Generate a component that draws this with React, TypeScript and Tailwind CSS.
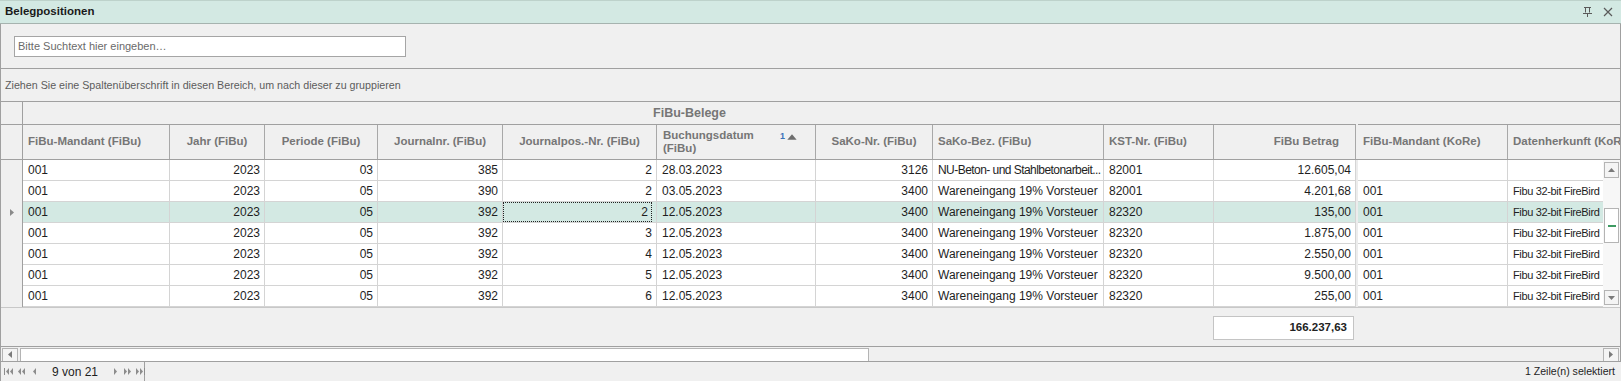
import React from "react";

type Col = {
  label: string;
  w: number;
  align: "left" | "right";
  head: "left" | "center" | "right";
  gapAfter?: boolean;
  tight?: boolean;
};

const cols: Col[] = [
  { label: "FiBu-Mandant (FiBu)", w: 147, align: "left", head: "left" },
  { label: "Jahr (FiBu)", w: 95, align: "right", head: "center" },
  { label: "Periode (FiBu)", w: 113, align: "right", head: "center" },
  { label: "Journalnr. (FiBu)", w: 125, align: "right", head: "center" },
  { label: "Journalpos.-Nr. (FiBu)", w: 154, align: "right", head: "center" },
  { label: "Buchungsdatum (FiBu)", w: 159, align: "left", head: "left" },
  { label: "SaKo-Nr. (FiBu)", w: 117, align: "right", head: "center" },
  { label: "SaKo-Bez. (FiBu)", w: 171, align: "left", head: "left" },
  { label: "KST-Nr. (FiBu)", w: 110, align: "left", head: "left" },
  { label: "FiBu Betrag", w: 142, align: "right", head: "right", gapAfter: true },
  { label: "FiBu-Mandant (KoRe)", w: 150, align: "left", head: "left" },
  { label: "Datenherkunft (KoRe)", w: 140, align: "left", head: "left", tight: true },
];

const rows: string[][] = [
  ["001", "2023", "03", "385", "2", "28.03.2023", "3126", "NU-Beton- und Stahlbetonarbeit...", "82001", "12.605,04", "", ""],
  ["001", "2023", "05", "390", "2", "03.05.2023", "3400", "Wareneingang 19% Vorsteuer", "82001", "4.201,68", "001", "Fibu 32-bit FireBird"],
  ["001", "2023", "05", "392", "2", "12.05.2023", "3400", "Wareneingang 19% Vorsteuer", "82320", "135,00", "001", "Fibu 32-bit FireBird"],
  ["001", "2023", "05", "392", "3", "12.05.2023", "3400", "Wareneingang 19% Vorsteuer", "82320", "1.875,00", "001", "Fibu 32-bit FireBird"],
  ["001", "2023", "05", "392", "4", "12.05.2023", "3400", "Wareneingang 19% Vorsteuer", "82320", "2.550,00", "001", "Fibu 32-bit FireBird"],
  ["001", "2023", "05", "392", "5", "12.05.2023", "3400", "Wareneingang 19% Vorsteuer", "82320", "9.500,00", "001", "Fibu 32-bit FireBird"],
  ["001", "2023", "05", "392", "6", "12.05.2023", "3400", "Wareneingang 19% Vorsteuer", "82320", "255,00", "001", "Fibu 32-bit FireBird"],
];

const selectedRow = 2;

function Tri({ dir, className = "" }: { dir: "l" | "r" | "u" | "d"; className?: string }) {
  const pts = {
    l: "5,0 5,7 1,3.5",
    r: "1,0 1,7 5,3.5",
    u: "0,5 7,5 3.5,1",
    d: "0,1 7,1 3.5,5",
  }[dir];
  const vb = dir === "l" || dir === "r" ? "0 0 6 7" : "0 0 7 6";
  const size = dir === "l" || dir === "r" ? "w-[6px] h-[7px]" : "w-[7px] h-[6px]";
  return (
    <svg viewBox={vb} className={`${size} ${className}`}>
      <polygon points={pts} fill="currentColor" />
    </svg>
  );
}

function NavIcon({ kind }: { kind: "first" | "prevPage" | "prev" | "next" | "nextPage" | "last" }) {
  return (
    <svg viewBox="0 0 10 7" className="w-[10px] h-[7px] shrink-0 text-[#8c8c8c]">
      {kind === "first" && (
        <>
          <rect x="0" y="0" width="1" height="7" fill="currentColor" />
          <polygon points="5,0 5,7 2,3.5" fill="currentColor" />
          <polygon points="9,0 9,7 6,3.5" fill="currentColor" />
        </>
      )}
      {kind === "prevPage" && (
        <>
          <polygon points="4,0 4,7 1,3.5" fill="currentColor" />
          <polygon points="8,0 8,7 5,3.5" fill="currentColor" />
        </>
      )}
      {kind === "prev" && <polygon points="6,0 6,7 3,3.5" fill="currentColor" />}
      {kind === "next" && <polygon points="4,0 4,7 7,3.5" fill="currentColor" />}
      {kind === "nextPage" && (
        <>
          <polygon points="1,0 1,7 4,3.5" fill="currentColor" />
          <polygon points="5,0 5,7 8,3.5" fill="currentColor" />
        </>
      )}
      {kind === "last" && (
        <>
          <polygon points="0,0 0,7 3,3.5" fill="currentColor" />
          <polygon points="4,0 4,7 7,3.5" fill="currentColor" />
          <rect x="8" y="0" width="1" height="7" fill="currentColor" />
        </>
      )}
    </svg>
  );
}

function HeaderCell({ col }: { col: Col }) {
  const justify =
    col.head === "center" ? "justify-center" : col.head === "right" ? "justify-end pr-[16px]" : "justify-start pl-[5px]";
  const isSort = col.label.startsWith("Buchungsdatum");
  return (
    <>
      <div
        style={{ width: col.w }}
        className={`shrink-0 h-full border-r border-[#a8a8a8] flex items-center overflow-hidden whitespace-nowrap font-bold text-[11.5px] text-[#767676] ${justify}`}
      >
        {isSort ? (
          <div className="flex w-full items-center justify-between pl-[1px] pr-[18px]">
            <div className="leading-[13px]">
              Buchungsdatum
              <br />
              (FiBu)
            </div>
            <div className="flex items-center gap-[2px] -mt-[10px]">
              <span className="text-[9px] text-[#3b72b9]">1</span>
              <Tri dir="u" className="w-[10px] h-[8px] text-[#6e6e6e]" />
            </div>
          </div>
        ) : (
          col.label
        )}
      </div>
      {col.gapAfter && <div className="w-[2px] shrink-0 h-full" />}
    </>
  );
}

export default function App() {
  return (
    <div className="w-[1621px] h-[381px] flex flex-col bg-[#f0f0f0] overflow-hidden text-[11px] text-[#1e1e1e] font-['Liberation_Sans',Arial,sans-serif]">
      {/* title bar */}
      <div className="h-[24px] shrink-0 flex items-center justify-between bg-[#d3e9e3] border-t border-[#bdd2cb] border-b border-b-[#a6b3af] pl-[5px] pr-[8px]">
        <span className="font-bold text-[11.5px] text-[#1a1a1a]">Belegpositionen</span>
        <div className="flex items-center gap-[11px] text-[#5a5a5a]">
          <svg viewBox="0 0 9 10" className="w-[9px] h-[10px]">
            <path d="M1 0.5H8M2.5 0.5V5.5M6.5 0.5V5.5M0 6.5H9M4.5 6.5V10" stroke="currentColor" strokeWidth="1" fill="none" />
          </svg>
          <svg viewBox="0 0 10 10" className="w-[10px] h-[10px]">
            <path d="M1 1L9 9M9 1L1 9" stroke="currentColor" strokeWidth="1.2" fill="none" />
          </svg>
        </div>
      </div>

      <div className="flex-1 flex flex-col border-l border-r border-[#a0a0a0] min-h-0">
        {/* search */}
        <div className="h-[45px] shrink-0 border-b border-[#a0a0a0] pl-[13px] pt-[12px]">
          <div className="w-[392px] h-[21px] bg-white border border-[#a5a5a5] flex items-center pl-[3px] text-[#6a6a6a]">
            Bitte Suchtext hier eingeben…
          </div>
        </div>

        {/* group panel */}
        <div className="h-[33px] shrink-0 border-b border-[#a0a0a0] flex items-center pl-[4px] text-[10.7px] text-[#5c5c5c]">
          Ziehen Sie eine Spaltenüberschrift in diesen Bereich, um nach dieser zu gruppieren
        </div>

        {/* band row */}
        <div className="h-[23px] shrink-0 flex">
          <div className="w-[22px] shrink-0 border-r border-b border-[#a0a0a0]" />
          <div className="w-[1333px] shrink-0 border-b border-[#a0a0a0] flex items-center justify-center font-bold text-[12.5px] text-[#767676]">
            FiBu-Belege
          </div>
          <div className="w-[2px] shrink-0" />
          <div className="flex-1 border-b border-[#a0a0a0]" />
        </div>

        {/* column headers */}
        <div className="h-[35px] shrink-0 flex border-b border-[#a0a0a0] overflow-hidden">
          <div className="w-[22px] shrink-0 border-r border-[#a0a0a0]" />
          {cols.map((c) => (
            <HeaderCell key={c.label} col={c} />
          ))}
        </div>

        {/* rows + vertical scrollbar */}
        <div className="h-[147px] shrink-0 flex">
          <div className="flex-1 overflow-hidden">
            {rows.map((r, ri) => {
              const sel = ri === selectedRow;
              return (
                <div key={ri} className="h-[21px] flex">
                  <div className="w-[22px] shrink-0 border-r border-[#a0a0a0] flex items-center pl-[8px]">
                    {sel && <Tri dir="r" className="w-[4px] h-[7px] text-[#8a8a8a]" />}
                  </div>
                  {cols.map((c, ci) => {
                    const focus = sel && ci === 4;
                    const long = r[ci].endsWith("...");
                    return (
                      <React.Fragment key={ci}>
                        <div
                          style={{ width: c.w }}
                          className={`shrink-0 h-full border-r border-b border-[#d4d4d4] flex items-center overflow-hidden whitespace-nowrap ${
                            c.tight ? "text-[11px] tracking-[-0.35px]" : long ? "text-[12px] tracking-[-0.55px]" : "text-[12px]"
                          } ${sel ? "bg-[#d3e9e3]" : "bg-white"} ${
                            c.align === "right" ? "justify-end pr-[4px]" : "pl-[5px] pr-[1px]"
                          }`}
                        >
                          {focus ? (
                            <div className="w-full h-full flex items-center justify-end pr-[3px] border border-dotted border-[#222]">
                              {r[ci]}
                            </div>
                          ) : (
                            r[ci]
                          )}
                        </div>
                        {c.gapAfter && <div className="w-[2px] shrink-0 h-full bg-[#ececec]" />}
                      </React.Fragment>
                    );
                  })}
                </div>
              );
            })}
          </div>
          <div className="w-[17px] shrink-0 flex flex-col items-center bg-[#f7f7f7] py-[2px]">
            <div className="w-[15px] h-[16px] border border-[#b4b4b4] bg-[#f4f4f4] flex items-center justify-center">
              <Tri dir="u" className="text-[#7a7a7a]" />
            </div>
            <div className="h-[30px]" />
            <div className="w-[15px] h-[35px] border border-[#b4b4b4] bg-white flex items-center justify-center">
              <div className="w-[8px] h-[2px] bg-[#3e9a62]" />
            </div>
            <div className="flex-1" />
            <div className="w-[15px] h-[15px] border border-[#b4b4b4] bg-[#f4f4f4] flex items-center justify-center">
              <Tri dir="d" className="text-[#7a7a7a]" />
            </div>
          </div>
        </div>

        {/* footer (totals) */}
        <div className="h-[39px] shrink-0 flex border-t border-[#c8c8c8] overflow-hidden">
          <div className="w-[22px] shrink-0" />
          {cols.map((c, ci) => (
            <React.Fragment key={ci}>
              <div style={{ width: c.w }} className="shrink-0 h-full pt-[8px]">
                {ci === 9 && (
                  <div className="w-[141px] h-[24px] -ml-[1px] bg-white border border-[#c4c4c4] flex items-center justify-end pr-[6px] font-bold text-[11.5px] text-[#222]">
                    166.237,63
                  </div>
                )}
              </div>
              {c.gapAfter && <div className="w-[2px] shrink-0" />}
            </React.Fragment>
          ))}
        </div>

        {/* horizontal scrollbar */}
        <div className="h-[16px] shrink-0 flex items-center border-t border-[#a0a0a0] px-[1px]">
          <div className="w-[16px] h-[14px] border border-[#b4b4b4] bg-[#f4f4f4] flex items-center justify-center">
            <Tri dir="l" className="w-[4px] h-[7px] text-[#7a7a7a]" />
          </div>
          <div className="w-[849px] h-[14px] ml-[2px] bg-white border border-[#b4b4b4]" />
          <div className="flex-1" />
          <div className="w-[16px] h-[14px] border border-[#b4b4b4] bg-[#f4f4f4] flex items-center justify-center">
            <Tri dir="r" className="w-[4px] h-[7px] text-[#7a7a7a]" />
          </div>
        </div>
      </div>

      {/* status bar */}
      <div className="h-[20px] shrink-0 flex items-center border-t border-[#a0a0a0] bg-[#f0f0f0]">
        <div className="w-[145px] h-full shrink-0 border-l border-r border-[#a0a0a0] flex items-center pl-[3px] gap-[3px] whitespace-nowrap">
          <NavIcon kind="first" />
          <NavIcon kind="prevPage" />
          <NavIcon kind="prev" />
          <span className="ml-[9px] mr-[9px] text-[12px] text-[#1e1e1e] whitespace-nowrap">9 von 21</span>
          <NavIcon kind="next" />
          <NavIcon kind="nextPage" />
          <NavIcon kind="last" />
        </div>
        <div className="flex-1 text-right pr-[6px] text-[10.6px] text-[#1e1e1e]">1 Zeile(n) selektiert</div>
      </div>
    </div>
  );
}
